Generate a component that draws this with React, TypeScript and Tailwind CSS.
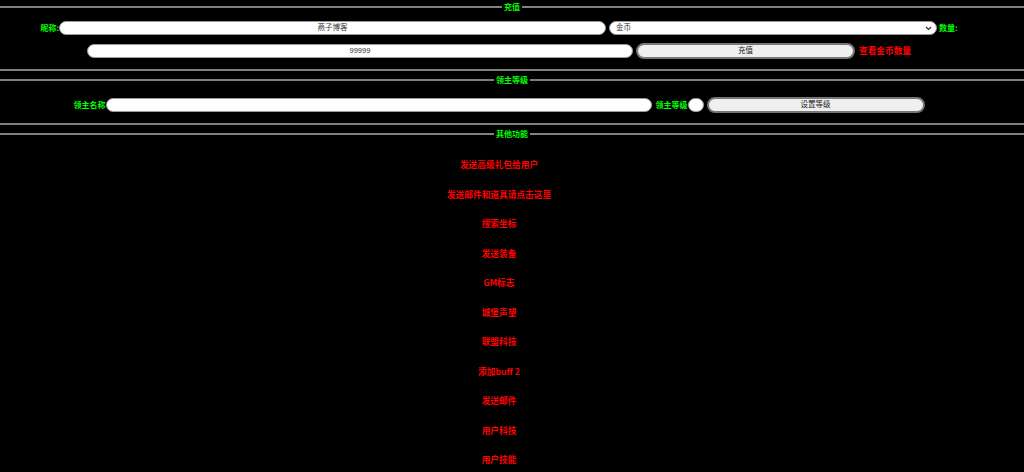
import React from "react";

const cjk = { fontFamily: '"Noto Sans CJK SC", "Noto Sans", sans-serif' };
const inputFont = { fontFamily: '"Liberation Sans", "Noto Sans CJK SC", sans-serif' };

function Legend({ text }: { text: string }) {
  return (
    <div className="flex h-[14px] items-center">
      <div className="h-[2px] flex-1 bg-[#808080]" />
      <span className="px-[2px] text-[8px] font-bold leading-none text-[#00ff00]" style={cjk}>
        {text}
      </span>
      <div className="h-[2px] flex-1 bg-[#808080]" />
    </div>
  );
}

function Label({ text, red, className = "" }: { text: string; red?: boolean; className?: string }) {
  return (
    <span
      className={`block whitespace-nowrap font-bold leading-none ${red ? "text-[8.7px] text-[#ff0000]" : "text-[8px] text-[#00ff00]"} ${className}`}
      style={cjk}
    >
      {text}
    </span>
  );
}

function Input({ w, value, className = "" }: { w: string; value?: string; className?: string }) {
  return (
    <div
      className={`flex h-[14px] items-center justify-center rounded-full border border-[#999] bg-white px-[6px] text-[7.5px] leading-none text-[#333] ${w} ${className}`}
      style={inputFont}
    >
      {value}
    </div>
  );
}

function Button({ w, text, className = "" }: { w: string; text: string; className?: string }) {
  return (
    <div
      className={`flex h-[16px] items-center justify-center rounded-full border-2 border-[#767676] bg-[#efefef] text-[7.5px] leading-none text-[#222] ${w} ${className}`}
      style={inputFont}
    >
      {text}
    </div>
  );
}

const items = [
  "发送高级礼包给用户",
  "发送邮件和道具请点击这里",
  "搜索坐标",
  "发送装备",
  "GM标志",
  "城堡声望",
  "联盟科技",
  "添加buff 2",
  "发送邮件",
  "用户科技",
  "用户技能",
];

export default function App() {
  return (
    <div className="h-[472px] w-[1024px] overflow-hidden bg-black">
      {/* Fieldset 1 */}
      <div className="border-b-2 border-[#808080] pb-[10px]">
        <Legend text="充值" />
        <div className="pr-[26px] pt-[6px]">
          <div className="flex h-[16px] items-center justify-center">
            <Label text="昵称:" />
            <Input w="w-[547px]" value="燕子博客" />
            <div
              className="ml-[3px] flex h-[14px] w-[328px] items-center justify-between rounded-full border border-[#999] bg-white pl-[6px] pr-[4px] text-[7.5px] leading-none text-[#333]"
              style={inputFont}
            >
              <span>金币</span>
              <svg width="7" height="5" viewBox="0 0 7 5" fill="none">
                <path d="M1 1l2.5 2.5L6 1" stroke="#333" strokeWidth="1.2" />
              </svg>
            </div>
            <Label text="数量:" className="ml-[2px]" />
          </div>
          <div className="mt-[7px] flex h-[16px] items-center justify-center">
            <Input w="w-[546px]" value="99999" />
            <Button w="w-[219px]" text="充值" className="ml-[3px]" />
            <Label text="查看金币数量" red className="ml-[4px]" />
          </div>
        </div>
      </div>

      {/* Fieldset 2 */}
      <div className="mt-[2px] border-b-2 border-[#808080] pb-[10px]">
        <Legend text="领主等级" />
        <div className="pr-[26px] pt-[10px]">
          <div className="flex h-[16px] items-center justify-center">
            <Label text="领主名称" />
            <Input w="w-[546px]" />
            <Label text="领主等级" className="ml-[4px]" />
            <Input w="w-[16px]" />
            <Button w="w-[218px]" text="设置等级" className="ml-[3px]" />
          </div>
        </div>
      </div>

      {/* Fieldset 3 */}
      <div className="mt-[2px]">
        <Legend text="其他功能" />
        <div className="flex flex-col items-center pr-[26px] pt-[10px]">
          {items.map((t) => (
            <div key={t} className="flex h-[29.5px] items-center">
              <Label text={t} red />
            </div>
          ))}
        </div>
      </div>
    </div>
  );
}
